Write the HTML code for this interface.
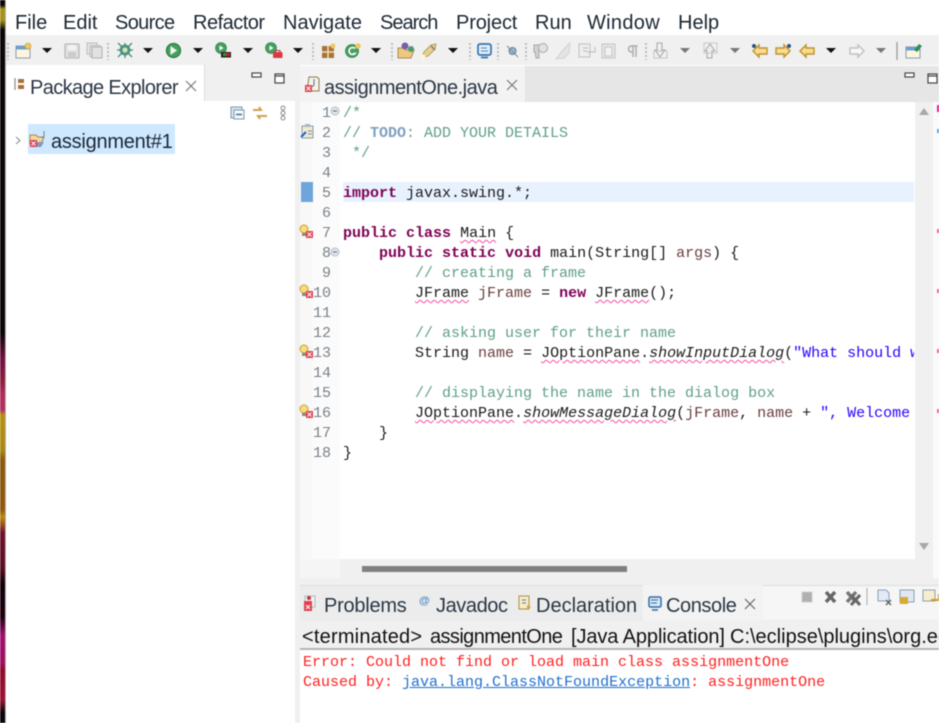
<!DOCTYPE html>
<html><head><meta charset="utf-8"><style>
html,body{margin:0;padding:0;width:939px;height:723px;overflow:hidden;background:#fff}
#w{position:relative;width:939px;height:723px;overflow:hidden;filter:blur(.4px);font-family:"Liberation Sans",sans-serif;color:#1f2a36}
.a{position:absolute}
.t{position:absolute;white-space:pre;line-height:24px}
.m{top:11px;font-size:20px;color:#1c2733}
.c{position:absolute;left:343px;white-space:pre;font:15px/20px "Liberation Mono",monospace;color:#1a1a1a;height:20px;margin-top:1px}
.n{position:absolute;left:306px;width:25px;text-align:right;font:15px/20px "Liberation Mono",monospace;color:#78828a;margin-top:1px}
.k{color:#7f0055;font-weight:bold}
.g{color:#5f9f86}.d{color:#7f9fbf;font-weight:bold}.s{color:#2a00ff}.v{color:#6a3e3e}
.w{text-decoration:underline wavy #f24fa5 1px;text-underline-offset:2px}
.i{font-style:italic}
svg{position:absolute;overflow:visible}
</style></head><body><div id="w">
<!-- desktop strip -->
<div class="a" style="left:0;top:0;width:5px;height:723px;background:linear-gradient(180deg,#0c0608 0,#0c0608 5px,#a8921a 9px,#a8921a 20px,#0c0608 30px,#0c0608 333px,#701040 357px,#8c2040 380px,#b0305a 395px,#b03060 410px,#b89010 415px,#a88a10 450px,#8a5a10 460px,#905a10 510px,#c08a10 517px,#701030 533px,#601020 567px,#100008 585px,#200010 617px,#a01070 635px,#a01060 663px,#900a30 670px,#a01030 700px,#0a0508 713px)"></div>
<div class="a" style="left:5px;top:0;width:1px;height:723px;background:#b5b5b5"></div>
<!-- menu -->
<span class="t m" style="left:15px">File</span><span class="t m" style="left:63px">Edit</span><span class="t m" style="left:115px;letter-spacing:-.65px">Source</span><span class="t m" style="left:193px;letter-spacing:-.5px">Refactor</span><span class="t m" style="left:283px">Navigate</span><span class="t m" style="left:380px;letter-spacing:-1px">Search</span><span class="t m" style="left:456px;letter-spacing:-.15px">Project</span><span class="t m" style="left:535px">Run</span><span class="t m" style="left:587px;letter-spacing:.3px">Window</span><span class="t m" style="left:678px">Help</span>
<!-- toolbar -->
<div class="a" style="left:6px;top:35px;width:933px;height:30px;background:#f0f0f0"></div>
<svg style="left:0;top:0" width="939" height="70">
<g fill="none" stroke="#bdbdbd" stroke-width="2" stroke-dasharray="2 2"><path d="M8 43V60M108 43V60M313 43V60M392 43V60M470 43V60M498 43V60M526 43V60M646 43V60"/></g>
<path d="M897 42V60" stroke="#999" stroke-width="1.300"/>
<g fill="#111"><path d="M42 48h10l-5 5zM143 48h10l-5 5zM193 48h10l-5 5zM243 48h10l-5 5zM293 48h10l-5 5zM371 48h10l-5 5zM448 48h10l-5 5zM826 48h10l-5 5z"/></g>
<g fill="#777"><path d="M680 48h10l-5 5zM730 48h10l-5 5zM876 48h10l-5 5z"/></g>
<!-- new -->
<rect x="16" y="46" width="14" height="12" fill="#fdf6df" stroke="#8a9ab0"/><rect x="16" y="46" width="14" height="3.500" fill="#6f9fd0"/><circle cx="28" cy="46" r="3" fill="#ecc860" stroke="#c8a040" stroke-width=".6"/>
<!-- save -->
<rect x="65" y="44" width="14" height="14" rx="1" fill="#e2e2e2" stroke="#b8b8b8" stroke-width="1.300"/><rect x="68" y="45" width="8" height="5" fill="#f2f2f2"/><rect x="68" y="52" width="8" height="6" fill="#cccccc"/>
<rect x="87" y="43" width="10" height="11" fill="#e6e6e6" stroke="#bcbcbc"/><rect x="90" y="45.500" width="10" height="11" fill="#e6e6e6" stroke="#bcbcbc"/><rect x="92" y="47" width="10" height="11" fill="#e2e2e2" stroke="#b0b0b0"/>
<!-- bug -->
<circle cx="125" cy="50" r="5.500" fill="#4f9a88"/><path d="M118 43l14 14M132 43l-14 14M117 50h16M125 43v15" stroke="#4d8878" stroke-width="1.300"/><circle cx="125" cy="50" r="2.600" fill="#cfe4c0"/>
<!-- run -->
<circle cx="173.500" cy="50.500" r="7" fill="#45a060" stroke="#2d7a48" stroke-width="1.300"/><path d="M170.500 46l6.500 4.500-6.500 4.500z" fill="#eef8e8"/>
<circle cx="221" cy="48" r="5.500" fill="#45a060" stroke="#2d7a48" stroke-width=".6"/><path d="M219.500 45.500l4 2.500-4 2.500z" fill="#fff"/><rect x="221" y="52" width="10" height="5.500" fill="#222"/><rect x="223" y="53" width="3" height="3" fill="#2a9a3a"/><rect x="226" y="53" width="4" height="3" fill="#d02020"/>
<circle cx="271" cy="48" r="5.500" fill="#45a060" stroke="#2d7a48" stroke-width=".6"/><path d="M269.500 45.500l4 2.500-4 2.500z" fill="#fff"/><rect x="273" y="52" width="9.500" height="6" rx="1" fill="#d83a44"/><path d="M275.500 52v-1.500h4.500V52" stroke="#c03038" fill="none"/>
<!-- pkg -->
<rect x="322" y="46" width="12" height="12" fill="#a8703c"/><path d="M328 46v12M322 52h12" stroke="#f3e0b0" stroke-width="1.500"/><circle cx="333" cy="46" r="2.500" fill="#ecc860"/>
<circle cx="352" cy="51" r="6.500" fill="#48a060" stroke="#2d7a48" stroke-width=".8"/><path d="M355 48.500a3.500 3.500 0 1 0 0 5h-2" stroke="#fff" fill="none" stroke-width="1.600"/><circle cx="358" cy="46" r="2.800" fill="#ecc860"/>
<!-- folder -->
<path d="M398 48h6l2 2h8l-3 8h-13z" fill="#ecc880" stroke="#ab8c4a"/><circle cx="405" cy="46" r="3.500" fill="#7560a8"/><circle cx="411" cy="49" r="3" fill="#4a9a70"/>
<path d="M422 58l2-6 7-7 5-1-1 5-7 7z" fill="#e8cf95" stroke="#b39a60"/><path d="M431 46l4 4" stroke="#8a7a60" stroke-width="1.500"/><circle cx="423" cy="57" r="2.500" fill="#fff8d8"/>
<!-- monitor -->
<rect x="478" y="44" width="13" height="11" rx="2" fill="#e6eef6" stroke="#2f75b5" stroke-width="1.700"/><path d="M481 48h6M481 51h7" stroke="#4a88c0"/><path d="M481 57.500h7" stroke="#2f75b5" stroke-width="1.700"/>
<!-- disabled group -->
<circle cx="512.500" cy="51" r="3.500" fill="#9ab8cc" stroke="#5f7f96"/><path d="M507 46l11 11" stroke="#7a8c9c"/>
<path d="M534 45h8v5h-3v8h-3l-1-6h-1z" fill="#d2d2d2" stroke="#a8a8a8"/><circle cx="543" cy="48" r="4.500" fill="#e2e2e2" stroke="#a8a8a8"/>
<path d="M556 59l7-9 7-7-1 10-5 5z" fill="#e4e4e4" stroke="#d2d2d2"/>
<rect x="579" y="44" width="11" height="13" fill="#eee" stroke="#c0c0c0"/><path d="M583 48h5M583 51h4M587 52h8v-5" stroke="#bbb" fill="none"/>
<rect x="602" y="44" width="13" height="14" fill="#e6e6e6" stroke="#c4c4c4"/><rect x="605" y="47" width="7" height="9" fill="#f2f2f2" stroke="#c4c4c4"/>
<path d="M633 46v11M636 46v11M637.500 46h-6a3 3 0 0 0 0 6h2" stroke="#aaa" fill="none" stroke-width="1.400"/>
<path d="M657 43h5v7h3l-5 7-5-7h2z" fill="#eee" stroke="#a8a8a8"/><rect x="654" y="51" width="13" height="7" fill="none" stroke="#c4c4c4"/>
<path d="M707 58h5v-7h3l-5-7-5 7h2z" fill="#eee" stroke="#a8a8a8"/><rect x="704" y="43" width="13" height="10" fill="none" stroke="#c8c8c8"/>
<!-- arrows -->
<g fill="#f8dc90" stroke="#c0922c" stroke-width="1.400"><path d="M753 51l6-6v3h8v6h-8v3z"/><path d="M790 51l-6-6v3h-8v6h8v3z"/><path d="M800 51l6-6v3h8v6h-8v3z"/></g>
<circle cx="754" cy="46" r="2" fill="#2f4f80"/><circle cx="789" cy="46" r="2" fill="#2f4f80"/>
<path d="M864 51l-6-6v3h-8v6h8v3z" fill="#f8f8f8" stroke="#c0c0c0" stroke-width="1.400"/>
<rect x="906" y="47" width="14" height="11" fill="#fdf6df" stroke="#8a9ab0"/><rect x="906" y="47" width="14" height="3.500" fill="#6f9fd0"/><path d="M914 50l5-6 3 2-5 6z" fill="#2f8f4f"/>
</svg>
<!-- left panel -->
<div class="a" style="left:204px;top:65px;width:91px;height:36px;background:#f0f0f0"></div>
<div class="a" style="left:295px;top:65px;width:5px;height:658px;background:#f0f0f0"></div>
<div class="a" style="left:6px;top:65px;width:198px;height:36px;background:#fff"></div>
<div class="a" style="left:204px;top:65px;width:1px;height:36px;background:#dcdcdc"></div>
<span class="t" style="left:30px;top:76px;font-size:20px;color:#2b3744;letter-spacing:-.62px">Package Explorer</span>
<div class="a" style="left:28px;top:124px;width:147px;height:30px;background:#cde8ff;border-radius:1px"></div>
<span class="t" style="left:51px;top:130px;font-size:20px;color:#1c2733;letter-spacing:-.25px">assignment#1</span>
<svg style="left:0;top:0" width="300" height="160">
<path d="M15 78v12" stroke="#8a8a8a" stroke-width="1.200"/><path d="M18 79h6v4h-6zM18 85h6v4h-6z" fill="#a8703c"/>
<path d="M186 81l10 10M196 81l-10 10" stroke="#777" stroke-width="1.200"/>
<rect x="252" y="73" width="9" height="4" fill="#fff" stroke="#444" stroke-width="1.200"/>
<rect x="275" y="74" width="9" height="9" fill="#fff" stroke="#444" stroke-width="1.200"/><path d="M275 76h9" stroke="#444" stroke-width="1.200"/>
<rect x="231" y="107" width="11" height="11" fill="#d8e6f0" stroke="#7a9ab0"/><rect x="234" y="110" width="10" height="9" fill="#f4f8fb" stroke="#7a9ab0"/><path d="M236 114.500h6" stroke="#3a6f96" stroke-width="1.500"/>
<path d="M253 110h8l-2-3M267 116h-9l2 3" fill="none" stroke="#d2a04a" stroke-width="2"/>
<circle cx="283" cy="108" r="2" fill="#fff" stroke="#888"/><circle cx="283" cy="113" r="2" fill="#fff" stroke="#888"/><circle cx="283" cy="118" r="2" fill="#fff" stroke="#888"/>
<path d="M16 137l4 3.500-4 3.500" fill="none" stroke="#888"/>
<path d="M30 135h6l2 2h6l-3 7H30z" fill="#f0d8a0" stroke="#a8874c"/><path d="M33 142h11l-3 5H33z" fill="#7a9ac0"/><path d="M44 131v5a2 2 0 0 1-3 1" fill="none" stroke="#6a7fa0"/><rect x="30" y="140" width="7" height="7" fill="#e04050"/><path d="M31.500 141.500l4 4M35.500 141.500l-4 4" stroke="#fff"/>
</svg>
<!-- editor tab bar -->
<div class="a" style="left:300px;top:66px;width:639px;height:36px;background:#e6e6e6"></div>
<div class="a" style="left:300px;top:66px;width:225px;height:36px;background:#f3f3f3"></div>
<span class="t" style="left:324px;top:76px;font-size:20px;color:#2b3744;letter-spacing:-.5px">assignmentOne.java</span>
<svg style="left:0;top:0" width="939" height="110">
<path d="M309 77h8l2 2v12h-12z" fill="#f6f2e6" stroke="#8a7a5a"/><path d="M314 79v6a2 2 0 0 1-3 1" fill="none" stroke="#4a6a9a"/><rect x="305" y="85" width="7" height="7" fill="#e04050"/><path d="M306.500 86.500l4 4M310.500 86.500l-4 4" stroke="#fff"/>
<path d="M507 80l10 10M517 80l-10 10" stroke="#777" stroke-width="1.200"/>
<rect x="905" y="73" width="9" height="4" fill="#fff" stroke="#444" stroke-width="1.200"/>
<rect x="928" y="74" width="9" height="9" fill="#fff" stroke="#444" stroke-width="1.200"/><path d="M928 76h9" stroke="#444" stroke-width="1.200"/>
</svg>
<!-- editor -->
<div class="a" style="left:300px;top:102px;width:12px;height:457px;background:#f8f8f8"></div>
<div class="a" style="left:312px;top:102px;width:28px;height:457px;background:#fbfbfb"></div>
<div class="a" style="left:343px;top:182px;width:571px;height:20px;background:#e8f2fe"></div>
<div class="a" style="left:301px;top:182px;width:12px;height:20px;background:#6ea6dc"></div>
<div class="n" style="top:103px">1</div><div class="n" style="top:123px">2</div><div class="n" style="top:143px">3</div><div class="n" style="top:163px">4</div><div class="n" style="top:183px">5</div><div class="n" style="top:203px">6</div><div class="n" style="top:223px">7</div><div class="n" style="top:243px">8</div><div class="n" style="top:263px">9</div><div class="n" style="top:283px">10</div><div class="n" style="top:303px">11</div><div class="n" style="top:323px">12</div><div class="n" style="top:343px">13</div><div class="n" style="top:363px">14</div><div class="n" style="top:383px">15</div><div class="n" style="top:403px">16</div><div class="n" style="top:423px">17</div><div class="n" style="top:443px">18</div>
<div class="c g" style="top:103px">/*</div>
<div class="c g" style="top:123px">// <span class="d">TODO</span>: ADD YOUR DETAILS</div>
<div class="c g" style="top:143px"> */</div>
<div class="c" style="top:183px"><span class="k">import</span> javax.swing.*;</div>
<div class="c" style="top:223px"><span class="k">public</span> <span class="k">class</span> <span class="w">Main</span> {</div>
<div class="c" style="top:243px">    <span class="k">public</span> <span class="k">static</span> <span class="k">void</span> main(String[] <span class="v">args</span>) {</div>
<div class="c g" style="top:263px">        // creating a frame</div>
<div class="c" style="top:283px">        <span class="w">JFrame</span> <span class="v">jFrame</span> = <span class="k">new</span> <span class="w">JFrame</span>();</div>
<div class="c g" style="top:323px">        // asking user for their name</div>
<div class="c" style="top:343px;width:571px;height:22px;overflow:hidden">        String <span class="v">name</span> = <span class="w">JOptionPane</span>.<span class="i w">showInputDialog</span>(<span class="s">"What should w</span></div>
<div class="c g" style="top:383px">        // displaying the name in the dialog box</div>
<div class="c" style="top:403px;width:571px;height:22px;overflow:hidden">        <span class="w">JOptionPane</span>.<span class="i w">showMessageDialog</span>(<span class="v">jFrame</span>, <span class="v">name</span> + <span class="s">", Welcome </span></div>
<div class="c" style="top:423px">    }</div>
<div class="c" style="top:443px">}</div>
<!-- scrollbars -->
<div class="a" style="left:915px;top:102px;width:18px;height:476px;background:#f0f0f0"></div>
<div class="a" style="left:933px;top:102px;width:6px;height:476px;background:#fafafa"></div>
<div class="a" style="left:300px;top:559px;width:633px;height:19px;background:#f0f0f0"></div>
<div class="a" style="left:300px;top:559px;width:40px;height:19px;background:#f5f5f5"></div>
<div class="a" style="left:362px;top:566px;width:265px;height:6px;background:#808080"></div>
<div class="a" style="left:300px;top:578px;width:639px;height:7px;background:#f0f0f0"></div>
<svg style="left:0;top:0" width="939" height="723">
<path d="M919 115l5-7 5 7zM919 543l5 7 5-7z" fill="#a8a8a8"/>
<rect x="937" y="105" width="2" height="7" fill="#ec1a8c"/>
<rect x="937" y="129" width="2" height="4" fill="#5aa8e8"/>
<g fill="#f060a8"><rect x="937" y="229" width="2" height="4"/><rect x="937" y="289" width="2" height="4"/><rect x="937" y="349" width="2" height="4"/><rect x="937" y="409" width="2" height="4"/></g>
<!-- fold -->
<circle cx="335" cy="111" r="4" fill="#dde4ea" stroke="#b4c0cc"/><path d="M333 111h4" stroke="#667"/>
<circle cx="335" cy="252" r="4" fill="#dde4ea" stroke="#b4c0cc"/><path d="M333 252h4" stroke="#667"/>
<!-- task -->
<rect x="302" y="126" width="11" height="12" fill="#f0ead0" stroke="#8a9ab0"/><rect x="305" y="124" width="5" height="3" fill="#a8b6c6"/><path d="M301 137l5-5" stroke="#1c64c8" stroke-width="2"/><path d="M308 131h4M308 134h4" stroke="#7a8a9a"/>
<!-- markers -->
<g><circle cx="304" cy="229" r="4" fill="#f8dc80" stroke="#c8a030"/><rect x="302" y="233" width="4" height="3" fill="#888"/><rect x="306" y="231" width="7" height="7" fill="#e04050"/><path d="M307.500 232.500l4 4M311.500 232.500l-4 4" stroke="#fff"/></g>
<g transform="translate(0 60)"><circle cx="304" cy="229" r="4" fill="#f8dc80" stroke="#c8a030"/><rect x="302" y="233" width="4" height="3" fill="#888"/><rect x="306" y="231" width="7" height="7" fill="#e04050"/><path d="M307.500 232.500l4 4M311.500 232.500l-4 4" stroke="#fff"/></g>
<g transform="translate(0 120)"><circle cx="304" cy="229" r="4" fill="#f8dc80" stroke="#c8a030"/><rect x="302" y="233" width="4" height="3" fill="#888"/><rect x="306" y="231" width="7" height="7" fill="#e04050"/><path d="M307.500 232.500l4 4M311.500 232.500l-4 4" stroke="#fff"/></g>
<g transform="translate(0 180)"><circle cx="304" cy="229" r="4" fill="#f8dc80" stroke="#c8a030"/><rect x="302" y="233" width="4" height="3" fill="#888"/><rect x="306" y="231" width="7" height="7" fill="#e04050"/><path d="M307.500 232.500l4 4M311.500 232.500l-4 4" stroke="#fff"/></g>
</svg>
<!-- bottom panel -->
<div class="a" style="left:300px;top:585px;width:639px;height:36px;background:#ececec;border-top:1px solid #dcdcdc;box-sizing:border-box"></div>
<div class="a" style="left:643px;top:585px;width:120px;height:36px;background:#f3f3f3"></div>
<div class="a" style="left:763px;top:586px;width:176px;height:34px;background:#f6f6f6"></div>
<span class="t" style="left:324px;top:594px;font-size:20px;color:#2b3744;letter-spacing:-.25px">Problems</span>
<span class="t" style="left:436px;top:594px;font-size:20px;color:#2b3744;letter-spacing:-.42px">Javadoc</span>
<span class="t" style="left:536px;top:594px;font-size:20px;color:#2b3744">Declaration</span>
<span class="t" style="left:666px;top:594px;font-size:20px;color:#2b3744;letter-spacing:-.42px">Console</span>
<div class="a" style="left:300px;top:621px;width:639px;height:27px;background:#f0f0f0;border-bottom:2px solid #b4b4b4"></div>
<span class="t" style="left:302px;top:625px;font-size:20px;color:#111;letter-spacing:.2px">&lt;terminated&gt;</span>
<span class="t" style="left:430px;top:625px;font-size:20px;color:#111;letter-spacing:-.6px">assignmentOne</span>
<span class="t" style="left:571px;top:625px;font-size:20px;color:#111;letter-spacing:-.1px">[Java Application]</span>
<span class="t" style="left:730px;top:625px;font-size:20px;color:#111">C:\eclipse\plugins\org.ec</span>
<div class="a" style="left:303px;top:653px;white-space:pre;font:15px/20px 'Liberation Mono',monospace;color:#ff2020">Error: Could not find or load main class assignmentOne</div>
<div class="a" style="left:303px;top:673px;white-space:pre;font:15px/20px 'Liberation Mono',monospace;color:#ff2020">Caused by: <span style="color:#1f6fd0;text-decoration:underline">java.lang.ClassNotFoundException</span>: assignmentOne</div>
<svg style="left:0;top:0" width="939" height="723">
<rect x="305" y="596" width="10" height="11" fill="#f0f0f0" stroke="#b0b8c0"/><rect x="304" y="601" width="8" height="10" fill="#e04050"/><path d="M306 605l4 4M310 605l-4 4" stroke="#fff"/><circle cx="309" cy="598" r="2" fill="#c83040"/>
<text x="419" y="604" font-family="Liberation Sans" font-size="11" font-weight="bold" fill="#4a8ac0">@</text>
<rect x="519" y="596" width="10" height="13" fill="#f8ecc8" stroke="#a89050"/><path d="M527 605l4 2-4 3z" fill="#d8a040"/><path d="M522 600h4M522 603h4" stroke="#5a7a9a"/>
<rect x="649" y="597" width="12" height="10" rx="1.500" fill="#dce8f2" stroke="#2f6ba8" stroke-width="1.500"/><path d="M651 600h7M651 603h6" stroke="#2f6ba8"/><path d="M652 610h6" stroke="#2f6ba8" stroke-width="1.500"/>
<path d="M745 599l10 10M755 599l-10 10" stroke="#666" stroke-width="1.200"/>
<rect x="802" y="592" width="10" height="10" fill="#b0b0b0" stroke="#ccc"/>
<path d="M826 592l9 10M835 592l-9 10" stroke="#666" stroke-width="3.500"/>
<path d="M847 592l9 10M856 592l-9 10" stroke="#777" stroke-width="3.500"/><path d="M851 595l9 10M860 595l-9 10" stroke="#666" stroke-width="3"/>
<path d="M867 588v17" stroke="#aaa"/>
<path d="M878 590h8l3 3v8h-11z" fill="#e2ebf4" stroke="#8aa0b8"/><path d="M886 600l5 5M891 600l-5 5" stroke="#666" stroke-width="1.500"/>
<rect x="900" y="590" width="14" height="12" fill="#dfe8f2" stroke="#8aa0b8"/><rect x="900" y="597" width="8" height="7" fill="#d8a838"/>
<rect x="923" y="590" width="12" height="11" fill="#f6eecc" stroke="#8aa0b8"/><path d="M939 594v6h-8" stroke="#c89a30" stroke-width="2" fill="none"/>
</svg>
</div></body></html>
